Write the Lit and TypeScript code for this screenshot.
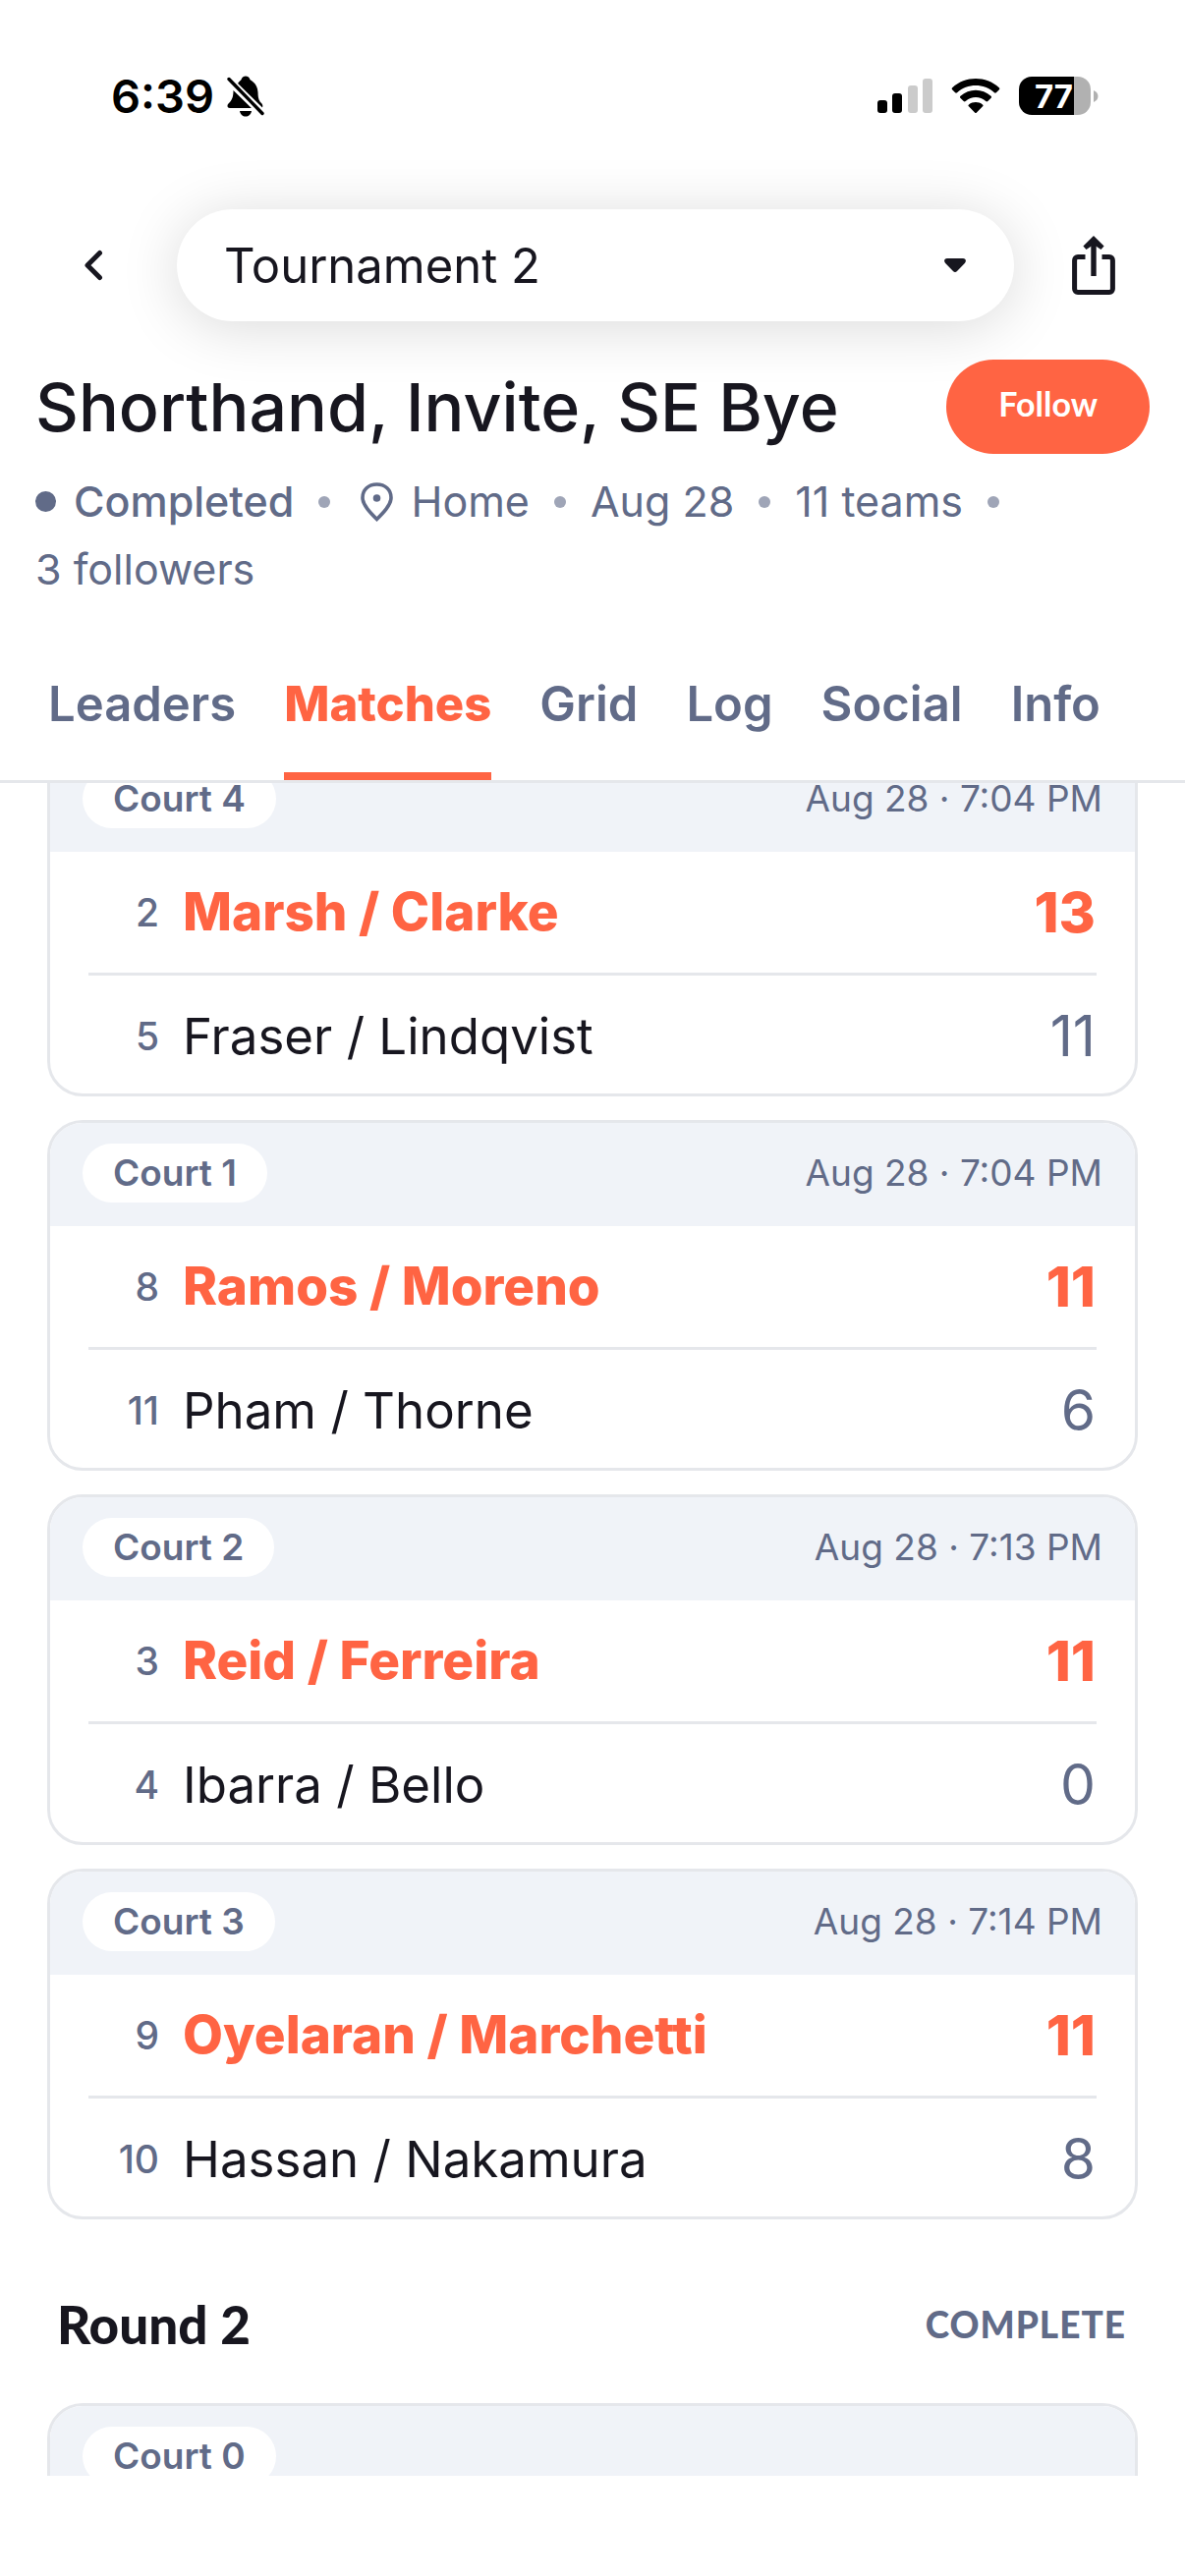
import { LitElement, html, css } from "lit";
import { customElement, property } from "lit/decorators.js";
import { classMap } from "lit/directives/class-map.js";

interface Team {
  seed: number;
  name: string;
  score: number;
}

interface Match {
  court: string;
  time: string;
  teams: Team[];
}

const roundOne: Match[] = [
  {
    court: "Court 4",
    time: "Aug 28 · 7:04 PM",
    teams: [
      { seed: 2, name: "Marsh / Clarke", score: 13 },
      { seed: 5, name: "Fraser / Lindqvist", score: 11 },
    ],
  },
  {
    court: "Court 1",
    time: "Aug 28 · 7:04 PM",
    teams: [
      { seed: 8, name: "Ramos / Moreno", score: 11 },
      { seed: 11, name: "Pham / Thorne", score: 6 },
    ],
  },
  {
    court: "Court 2",
    time: "Aug 28 · 7:13 PM",
    teams: [
      { seed: 3, name: "Reid / Ferreira", score: 11 },
      { seed: 4, name: "Ibarra / Bello", score: 0 },
    ],
  },
  {
    court: "Court 3",
    time: "Aug 28 · 7:14 PM",
    teams: [
      { seed: 9, name: "Oyelaran / Marchetti", score: 11 },
      { seed: 10, name: "Hassan / Nakamura", score: 8 },
    ],
  },
];

const roundTwo: Match[] = [{ court: "Court 0", time: "", teams: [] }];

const tabs = ["Leaders", "Matches", "Grid", "Log", "Social", "Info"];

@customElement("status-bar")
class StatusBar extends LitElement {
  static styles = css`
    :host {
      display: flex;
      align-items: center;
      justify-content: space-between;
      height: 195px;
      padding: 0 88px 0 113px;
      color: #000;
    }
    .clock,
    .signals {
      display: flex;
      align-items: center;
    }
    .clock {
      gap: 13px;
      font-size: 47px;
      font-weight: 600;
    }
    .signals {
      gap: 19px;
    }
    svg {
      display: block;
    }
    .battery {
      display: flex;
      align-items: center;
      gap: 3px;
    }
    .cell {
      display: flex;
      align-items: center;
      justify-content: center;
      box-sizing: border-box;
      width: 73px;
      height: 39px;
      padding-right: 2px;
      border-radius: 13px;
      background: linear-gradient(to right, #000 77%, #b1b1b1 77%);
      color: #fff;
      font-size: 33px;
      font-weight: 700;
    }
  `;

  render() {
    return html`
      <div class="clock">
        <span>6:39</span>
        <svg width="38" height="42" viewBox="0 0 38 42" aria-hidden="true">
          <path
            d="M11 8C13 5 14 5 14.500 4C15.500 1 17 .5 19 .5S22.500 1 23.500 4C24 5 31 7 31.500 17C31.600 24 33 26 35.500 28.500C36.500 30 36.500 31 36 32.500Z"
          />
          <path
            d="M6.500 15L25 33H3C0 33 0 30 1.500 28.500C5 25 6.500 22 6.500 15ZM13 36H25C24.500 39.500 22 41.500 19 41.500S13.500 39.500 13 36Z"
          />
          <path d="M2 4L36 39" stroke="#fff" stroke-width="7" />
          <path d="M2 3.500L36 38.500" stroke="#000" stroke-width="3.400" stroke-linecap="round" />
        </svg>
      </div>
      <div class="signals">
        <svg width="56" height="36" viewBox="0 0 56 36" aria-hidden="true">
          <rect x="0" y="22" width="10" height="13" rx="3" />
          <rect x="15" y="15" width="10" height="20" rx="3" />
          <rect x="31" y="7" width="10" height="28" rx="3" fill="#cbcbcb" />
          <rect x="46" y="0" width="10" height="35" rx="3" fill="#cbcbcb" />
        </svg>
        <svg width="50" height="36" viewBox="0 0 50 36" aria-hidden="true">
          <path
            d="M1.200 9.200C14.500-3 35.500-3 48.800 9.200C49.500 9.900 49.500 10.700 48.900 11.300L45.900 14.300C45.300 14.900 44.600 14.900 43.900 14.300C33.500 4.700 16.500 4.700 6.100 14.300C5.400 14.900 4.700 14.900 4.100 14.300L1.100 11.300C.5 10.700.5 9.900 1.200 9.200Z"
          />
          <path
            d="M9.500 17.800C18.200 9.800 31.800 9.800 40.500 17.800C41.200 18.500 41.200 19.200 40.600 19.800L37.300 23C36.700 23.600 36 23.600 35.300 23C29.500 17.800 20.500 17.800 14.700 23C14 23.600 13.300 23.600 12.700 23L9.400 19.800C8.800 19.200 8.800 18.500 9.500 17.800Z"
          />
          <path
            d="M18 26.400C22 23.200 28 23.200 32 26.400C32.700 27 32.700 27.700 32.100 28.300L26 34.500C25.300 35.200 24.700 35.200 24 34.500L17.900 28.300C17.300 27.700 17.300 27 18 26.400Z"
          />
        </svg>
        <div class="battery">
          <div class="cell">77</div>
          <svg width="5" height="12" viewBox="0 0 5 12" aria-hidden="true">
            <path d="M0 0C6 2.500 6 9.500 0 12Z" fill="#b1b1b1" />
          </svg>
        </div>
      </div>
    `;
  }
}

@customElement("match-card")
class MatchCard extends LitElement {
  @property({ attribute: false }) match!: Match;

  static styles = css`
    :host {
      display: block;
    }
    .card {
      border: 3px solid #e5e7eb;
      border-radius: 36px;
      overflow: hidden;
      background: #fff;
    }
    .head {
      display: flex;
      align-items: center;
      justify-content: space-between;
      padding: 21px 33px 24px;
      background: #f0f3f8;
      color: #616b88;
      font-size: 37px;
      line-height: 60px;
    }
    .court {
      padding: 0 31px;
      border-radius: 30px;
      background: #fff;
      font-weight: 600;
    }
    .teams {
      margin: 0 39px;
      padding: 0;
      list-style: none;
    }
    .team {
      display: grid;
      grid-template-columns: 72px 1fr auto;
      column-gap: 24px;
      align-items: center;
      padding: 31px 1px 31px 0;
      font-size: 51px;
      line-height: 61px;
      color: #17161f;
    }
    .team + .team {
      padding-bottom: 28px;
      border-top: 3px solid #e5e7eb;
    }
    .seed,
    .score {
      color: #616b88;
    }
    .seed {
      font-size: 39px;
      font-weight: 500;
      text-align: right;
    }
    .score {
      font-size: 57px;
    }
    .winner .name,
    .winner .score {
      color: #ff6443;
      font-weight: 800;
    }
    .winner .name {
      font-size: 53px;
    }
  `;

  render() {
    const { court, time, teams } = this.match;
    const best = Math.max(...teams.map((team) => team.score));
    return html`
      <article class="card">
        <header class="head">
          <span class="court">${court}</span>
          <time>${time}</time>
        </header>
        <ul class="teams">
          ${teams.map(
            (team) => html`
              <li class=${classMap({ team: true, winner: team.score === best })}>
                <span class="seed">${team.seed}</span>
                <span class="name">${team.name}</span>
                <span class="score">${team.score}</span>
              </li>
            `,
          )}
        </ul>
      </article>
    `;
  }
}

@customElement("app-root")
class AppRoot extends LitElement {
  static styles = css`
    :host {
      display: flex;
      flex-direction: column;
      box-sizing: border-box;
      height: 100vh;
      padding-bottom: 102px;
      overflow: hidden;
      background: #fff;
      color: #17161f;
      font-family: Inter, "Liberation Sans", sans-serif;
    }
    svg {
      display: block;
    }
    button {
      padding: 0;
      border: 0;
      background: none;
      color: inherit;
      font: inherit;
    }
    .toolbar {
      display: flex;
      align-items: center;
      padding: 18px 36px 0;
    }
    .back,
    .share {
      display: grid;
      place-items: center;
    }
    .back {
      width: 118px;
      height: 114px;
      margin-right: 26px;
    }
    .share {
      width: 114px;
      height: 114px;
      margin-left: 24px;
    }
    .picker {
      flex: 1;
      display: grid;
      align-items: center;
      height: 114px;
      border-radius: 57px;
      background: #fff;
      box-shadow: 0 6px 60px rgba(0, 0, 0, 0.15);
    }
    .picker select {
      grid-area: 1 / 1;
      height: 100%;
      padding: 0 96px 0 48px;
      border: 0;
      border-radius: 57px;
      background: none;
      color: inherit;
      font-family: inherit;
      font-size: 49px;
      appearance: none;
    }
    .caret {
      grid-area: 1 / 1;
      justify-self: end;
      margin-right: 49px;
      pointer-events: none;
    }
    .heading {
      display: flex;
      align-items: center;
      justify-content: space-between;
      padding: 39px 36px 0;
    }
    h1,
    h2 {
      margin: 0;
    }
    h1 {
      font-size: 68px;
      font-weight: 500;
      line-height: 96px;
    }
    .follow {
      height: 96px;
      padding: 0 53px 8px;
      border-radius: 48px;
      background: #ff6443;
      color: #fff;
      font-family: Lato, sans-serif;
      font-size: 34px;
      font-weight: 700;
    }
    .meta {
      display: flex;
      flex-wrap: wrap;
      column-gap: 25px;
      margin: 14px 36px 0;
      padding: 0;
      list-style: none;
      color: #616b88;
      font-size: 43px;
      line-height: 69px;
    }
    .meta li {
      display: flex;
      align-items: center;
      gap: 25px;
    }
    .meta li:not(:last-child)::after {
      content: "";
      width: 12px;
      height: 12px;
      border-radius: 50%;
      background: #9fa5b7;
    }
    .fact {
      display: flex;
      align-items: center;
      gap: 18px;
    }
    .place {
      padding-left: 6px;
    }
    .state {
      font-weight: 500;
    }
    .state::before {
      content: "";
      width: 21px;
      height: 21px;
      border-radius: 50%;
      background: #616b88;
    }
    .tabs {
      display: flex;
      gap: 49px;
      padding: 75px 49px 0;
      border-bottom: 3px solid #e5e7eb;
    }
    .tab {
      padding-bottom: 41px;
      border-bottom: 8px solid transparent;
      color: #616b88;
      font-size: 49px;
      font-weight: 600;
      line-height: 56px;
      text-decoration: none;
    }
    .current {
      border-color: #ff6443;
      color: #ff6443;
      font-weight: 800;
    }
    main {
      flex: 1;
      min-height: 0;
      overflow: hidden;
    }
    .scrolled {
      margin-top: -38px;
      padding: 0 48px;
    }
    .cards {
      display: grid;
      gap: 24px;
    }
    .round {
      display: flex;
      align-items: center;
      justify-content: space-between;
      padding: 79px 12px 53px 10px;
      font-family: Lato, sans-serif;
      line-height: 55px;
    }
    h2 {
      font-size: 53px;
      font-weight: 900;
    }
    .progress {
      color: #616b88;
      font-size: 37px;
      font-weight: 900;
      letter-spacing: 1px;
    }
  `;

  private cards(matches: Match[]) {
    return html`
      <div class="cards">
        ${matches.map((match) => html`<match-card .match=${match}></match-card>`)}
      </div>
    `;
  }

  render() {
    const pin = html`
      <svg width="33" height="40" viewBox="0 0 33 40" aria-hidden="true">
        <path
          d="M16.500 37.500C10 31 2 23 2 15.500C2 7.500 8 2 16.500 2S31 7.500 31 15.500C31 23 23 31 16.500 37.500Z"
          fill="none"
          stroke="#616b88"
          stroke-width="3.600"
        />
        <circle cx="16.500" cy="16" r="3.800" fill="#616b88" />
      </svg>
    `;
    return html`
      <status-bar></status-bar>
      <div class="toolbar">
        <button class="back" aria-label="Back">
          <svg width="20" height="32" viewBox="0 0 20 32" aria-hidden="true">
            <path
              d="M16.500 3.500L4 16L16.500 28.500"
              fill="none"
              stroke="#17161f"
              stroke-width="5"
              stroke-linecap="round"
              stroke-linejoin="round"
            />
          </svg>
        </button>
        <label class="picker">
          <select aria-label="Tournament">
            <option>Tournament 2</option>
          </select>
          <svg class="caret" width="22" height="14" viewBox="0 0 22 14" aria-hidden="true">
            <path
              d="M3 0H19C21.800 0 22.800 2.800 21 4.800L13 13C11.800 14.300 10.200 14.300 9 13L1 4.800C-.8 2.800.2 0 3 0Z"
              fill="#17161f"
            />
          </svg>
        </label>
        <button class="share" aria-label="Share">
          <svg width="44" height="60" viewBox="0 0 44 60" aria-hidden="true">
            <path
              d="M13.500 21.500H6C4 21.500 2.600 23 2.600 25V54C2.600 56 4 57.500 6 57.500H38C40 57.500 41.400 56 41.400 54V25C41.400 23 40 21.500 38 21.500H30.500"
              fill="none"
              stroke="#17161f"
              stroke-width="5"
            />
            <path d="M22 41V4" stroke="#17161f" stroke-width="5.400" />
            <path
              d="M22 0L32.600 10.600L29.500 14L22 9L14.500 14L11.400 10.600Z"
              fill="#17161f"
            />
          </svg>
        </button>
      </div>
      <div class="heading">
        <h1>Shorthand, Invite, SE Bye</h1>
        <button class="follow">Follow</button>
      </div>
      <ul class="meta">
        <li><span class="fact state">Completed</span></li>
        <li><span class="fact place">${pin}Home</span></li>
        <li>Aug 28</li>
        <li>11 teams</li>
        <li>3 followers</li>
      </ul>
      <nav class="tabs">
        ${tabs.map(
          (tab) => html`
            <a
              href="#${tab.toLowerCase()}"
              class=${classMap({ tab: true, current: tab === "Matches" })}
              >${tab}</a
            >
          `,
        )}
      </nav>
      <main>
        <div class="scrolled">
          ${this.cards(roundOne)}
          <div class="round">
            <h2>Round 2</h2>
            <span class="progress">COMPLETE</span>
          </div>
          ${this.cards(roundTwo)}
        </div>
      </main>
    `;
  }
}
